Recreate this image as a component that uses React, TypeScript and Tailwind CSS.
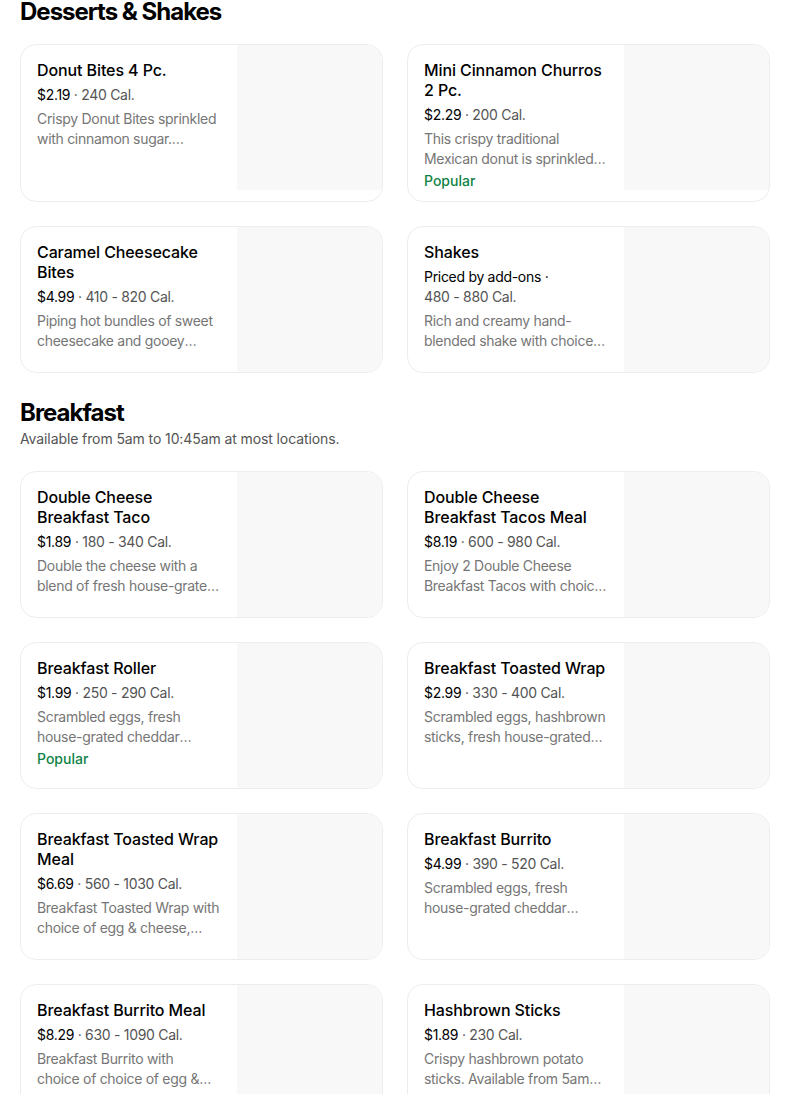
import React from "react";

type Item = {
  name: string;
  price?: string;
  priceNote?: string;
  cal: string;
  desc: string;
  popular?: boolean;
};

const desserts: Item[] = [
  {
    name: "Donut Bites 4 Pc.",
    price: "$2.19",
    cal: "240 Cal.",
    desc: "Crispy Donut Bites sprinkled with cinnamon sugar.\nServed warm.",
  },
  {
    name: "Mini Cinnamon Churros 2 Pc.",
    price: "$2.29",
    cal: "200 Cal.",
    desc: "This crispy traditional Mexican donut is sprinkled with cinnamon sugar.",
    popular: true,
  },
  {
    name: "Caramel Cheesecake Bites",
    price: "$4.99",
    cal: "410 - 820 Cal.",
    desc: "Piping hot bundles of sweet cheesecake and gooey caramel.",
  },
  {
    name: "Shakes",
    priceNote: "Priced by add-ons",
    cal: "480 - 880 Cal.",
    desc: "Rich and creamy hand-blended shake with choice\nof flavor.",
  },
];

const breakfast: Item[] = [
  {
    name: "Double Cheese Breakfast Taco",
    price: "$1.89",
    cal: "180 - 340 Cal.",
    desc: "Double the cheese with a blend of fresh house-grated cheddar.",
  },
  {
    name: "Double Cheese Breakfast Tacos Meal",
    price: "$8.19",
    cal: "600 - 980 Cal.",
    desc: "Enjoy 2 Double Cheese Breakfast Tacos with choice of drink.",
  },
  {
    name: "Breakfast Roller",
    price: "$1.99",
    cal: "250 - 290 Cal.",
    desc: "Scrambled eggs, fresh house-grated cheddar cheese and sausage.",
    popular: true,
  },
  {
    name: "Breakfast Toasted Wrap",
    price: "$2.99",
    cal: "330 - 400 Cal.",
    desc: "Scrambled eggs, hashbrown sticks, fresh house-grated cheddar.",
  },
  {
    name: "Breakfast Toasted Wrap Meal",
    price: "$6.69",
    cal: "560 - 1030 Cal.",
    desc: "Breakfast Toasted Wrap with choice of egg & cheese, sausage or bacon.",
  },
  {
    name: "Breakfast Burrito",
    price: "$4.99",
    cal: "390 - 520 Cal.",
    desc: "Scrambled eggs, fresh house-grated cheddar cheese and potatoes.",
  },
  {
    name: "Breakfast Burrito Meal",
    price: "$8.29",
    cal: "630 - 1090 Cal.",
    desc: "Breakfast Burrito with\nchoice of choice of egg & cheese and drink.",
  },
  {
    name: "Hashbrown Sticks",
    price: "$1.89",
    cal: "230 Cal.",
    desc: "Crispy hashbrown potato sticks. Available from 5am\nto 10:45am.",
    popular: true,
  },
];

function MenuCard({ item }: { item: Item }) {
  return (
    <div className="flex rounded-2xl border border-[#ededed] bg-white overflow-hidden">
      <div className="flex-1 min-w-0 pt-[15px] pb-[10px] pl-4 pr-3">
        <div className="text-[16px] leading-5 font-medium text-black tracking-[-0.1px]">{item.name}</div>
        <div className="mt-[5px] text-[14px] leading-5 tracking-[-0.3px]">
          {item.price ? (
            <>
              <span className="text-black">{item.price}</span>
              <span className="text-[#545454]"> · {item.cal}</span>
            </>
          ) : (
            <>
              <div className="text-black">{item.priceNote} ·</div>
              <div className="text-[#545454]">{item.cal}</div>
            </>
          )}
        </div>
        <div className="mt-1 text-[14px] leading-5 text-[#767676] tracking-[-0.3px] whitespace-pre-line line-clamp-2">
          {item.desc}
        </div>
        {item.popular && (
          <div className="mt-[2px] text-[14px] leading-5 font-medium text-[#0e8345]">Popular</div>
        )}
      </div>
      <div className="w-[145px] h-[145px] shrink-0 bg-[#f8f8f8]" />
    </div>
  );
}

function Section({ title, note, items }: { title: string; note?: string; items: Item[] }) {
  return (
    <section>
      <h2 className="text-[24px] leading-8 font-bold text-black tracking-[-1px]">{title}</h2>
      {note && <p className="text-[14px] leading-5 text-[#545454] tracking-[-0.1px]">{note}</p>}
      <div className={note ? "mt-[22px] grid grid-cols-2 gap-6" : "mt-4 grid grid-cols-2 gap-6"}>
        {items.map((it) => (
          <MenuCard key={it.name} item={it} />
        ))}
      </div>
    </section>
  );
}

export default function App() {
  return (
    <div className="bg-white w-[804px] h-[1094px] overflow-hidden" style={{ fontFamily: "Inter, 'Liberation Sans', sans-serif" }}>
      <div className="pl-5 pr-[34px] -mt-[4px] flex flex-col gap-6">
        <Section title="Desserts & Shakes" items={desserts} />
        <Section
          title="Breakfast"
          note="Available from 5am to 10:45am at most locations."
          items={breakfast}
        />
      </div>
    </div>
  );
}
